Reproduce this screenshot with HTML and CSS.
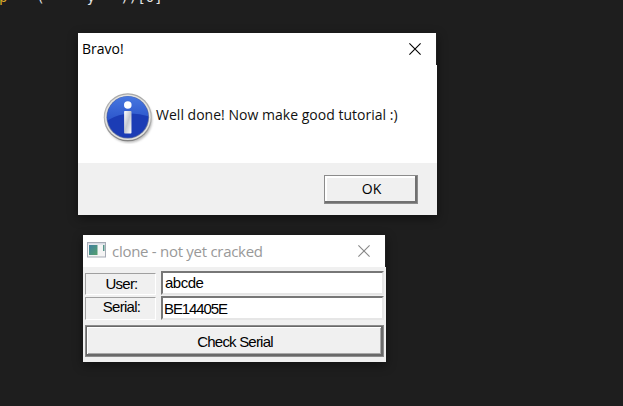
FILE: index.html
```html
<!DOCTYPE html>
<html lang="en">
<head>
<meta charset="utf-8">
<title>Bravo!</title>
<link rel="stylesheet" href="styles.css">
</head>
<body>
<main class="desktop">
  <div class="code"><span class="fn">p</span>&nbsp;&nbsp;&nbsp;&nbsp;(&nbsp;&nbsp;&nbsp;&nbsp;&nbsp;y&nbsp;&nbsp;&nbsp;))[0]</div>

  <section class="window message">
    <header class="titlebar">
      <span class="title">Bravo!</span>
      <svg class="close" viewBox="0 0 12 12"><path d="M.4.4l11.2 11.2M11.6.4L.4 11.6"/></svg>
    </header>
    <div class="message-body">
      <svg class="info" viewBox="0 0 50 50">
        <defs>
          <linearGradient id="ring" x2="0" y2="1"><stop stop-color="#a7a7a7"/><stop offset=".5" stop-color="#b9b9b9"/><stop offset="1" stop-color="#808080"/></linearGradient>
          <linearGradient id="blue" x2="0" y2="1"><stop stop-color="#4777df"/><stop offset="1" stop-color="#2c55cb"/></linearGradient>
          <linearGradient id="stem" x2="1" y2="1"><stop stop-color="#fff"/><stop offset=".5" stop-color="#c4c8cf"/><stop offset="1" stop-color="#fff"/></linearGradient>
          <filter id="soft"><feGaussianBlur stdDeviation="1"/></filter>
        </defs>
        <circle cx="25.5" cy="26" r="22.8" fill="#777" opacity=".5" filter="url(#soft)"/>
        <circle cx="24.3" cy="23.8" r="23.6" fill="url(#ring)"/>
        <circle cx="24.3" cy="23.8" r="22.4" fill="#e2e2e0"/>
        <circle cx="24.3" cy="23.8" r="20.9" fill="#6876a0"/>
        <circle cx="24.3" cy="23.8" r="20.1" fill="#1b3cb5"/>
        <path d="M4.2 23.8a20.1 20.1 0 0 1 40.2-1Q22 16 4.3 27z" fill="url(#blue)"/>
        <circle cx="24.3" cy="11.8" r="3.7" fill="#fff"/>
        <rect x="20.7" y="17.6" width="7.2" height="22" rx=".7" fill="url(#stem)"/>
      </svg>
      <p class="message-text">Well done! Now make good tutorial :)</p>
    </div>
    <footer class="message-footer"><button class="button ok">OK</button></footer>
  </section>

  <section class="window clone">
    <header class="titlebar inactive">
      <svg class="app-icon" viewBox="0 0 19 16">
        <defs><linearGradient id="app" x2="1" y2="1"><stop stop-color="#3f7fa0"/><stop offset="1" stop-color="#55a16c"/></linearGradient></defs>
        <rect x=".5" y=".5" width="18" height="14.5" fill="#f4f4f4" stroke="#a6abb5"/>
        <rect x="1" y="1" width="17" height="1.5" fill="#d5d9e2"/>
        <rect x="2" y="3" width="8.5" height="10" fill="url(#app)"/>
        <rect x="16" y="3" width="1.5" height="6" fill="#55958a"/>
      </svg>
      <span class="title">clone - not yet cracked</span>
      <svg class="close" viewBox="0 0 12 12"><path d="M.4.4l11.2 11.2M11.6.4L.4 11.6"/></svg>
    </header>
    <div class="form">
      <div class="row"><span class="label">User:</span><span class="field">abcde</span></div>
      <div class="row"><span class="label narrow">Serial:</span><span class="field serial">BE14405E</span></div>
      <button class="button check">Check Serial</button>
    </div>
  </section>
</main>
</body>
</html>
```
FILE: styles.css
```css
* { box-sizing: border-box; }
body { margin: 0; background: #1e1e1e; overflow: hidden; }
.desktop { width: 623px; height: 406px; display: flex; flex-direction: column; align-items: flex-start; }
.code { height: 33px; margin: -11px 0 11px -6px; font: 14px/17px "DejaVu Sans Mono", monospace; color: #e4e4e4; white-space: pre; flex: none; }
.fn { color: #d9a827; margin: 0 -5px 0 5px; }
.window { box-shadow: 0 3px 10px rgba(0,0,0,.45); flex: none; }
.titlebar { height: 32px; display: flex; align-items: center; background: #fff; margin-right: 1px; font: 15px/20px "Open Sans", sans-serif; color: #000; }
.title { white-space: nowrap; }
.close { width: 12px; height: 12px; margin-left: auto; fill: none; stroke: #000; stroke-width: 1.1; }
.message { width: 359px; height: 182px; margin-left: 78px; }
.message .titlebar { padding: 0 15px 0 4px; }
.message .title { font-size: 14px; }
.message-body { height: 98px; background: #fff; display: flex; align-items: flex-start; padding: 28px 0 0 25px; }
.info { width: 51px; height: 51px; flex: none; }
.message-text { margin: 12px 0 0 2px; font: 14px/20px "Open Sans", sans-serif; letter-spacing: .02px; color: #111; white-space: nowrap; }
.message-footer { height: 52px; background: #f0f0f0; display: flex; justify-content: flex-end; padding: 12px 19px 0 0; }
.button { display: flex; align-items: center; justify-content: center; border: 1px solid #8c8c8c; border-radius: 0; background: #f0f0f0; color: #000; }
.ok { width: 94px; height: 29px; padding: 0 0 2px 1px; font: 14px/20px "Open Sans", sans-serif; box-shadow: inset -2px -2px #707070, inset 2px 2px #fff; }
.clone { width: 303px; height: 127px; margin: 20px 0 0 83px; }
.inactive { padding: 0 15px 0 4px; color: #999; }
.app-icon { width: 19px; height: 16px; margin-right: 6px; margin-bottom: 2px; }
.inactive .title { font-size: 15px; letter-spacing: -.28px; }
.inactive .close { stroke: #888; }
.form { height: 95px; background: #f0f0f0; padding: 4px 2px; }
.row { display: flex; align-items: flex-end; height: 24px; margin-bottom: 1px; }
.label { width: 71px; height: 22px; border: 1px solid; border-color: #a0a0a0 #fff #fff #a0a0a0; margin-right: 5px; text-align: center; padding-left: 2px; }
.label, .field, .check { font: 15px/19px "Liberation Sans", sans-serif; color: #000; letter-spacing: -.75px; }
.row .narrow { height: 23px; line-height: 18px; }
.field { width: 223px; height: 24px; background: #fff; border: 2px solid; border-color: #777 #e6e6e6 #e6e6e6 #777; padding-left: 2px; line-height: 20px; letter-spacing: -.5px; }
.serial { padding-left: 1px; letter-spacing: -1.1px; line-height: 21px; }
.check { width: 299px; height: 32px; margin: 5px 0 0 0; padding: 1px 0 0 1px; letter-spacing: -.8px; box-shadow: inset 1px 1px #696969, inset -2px -2px #696969, inset 2px 2px #fff, inset -3px -3px #a8a8a8; }
```
